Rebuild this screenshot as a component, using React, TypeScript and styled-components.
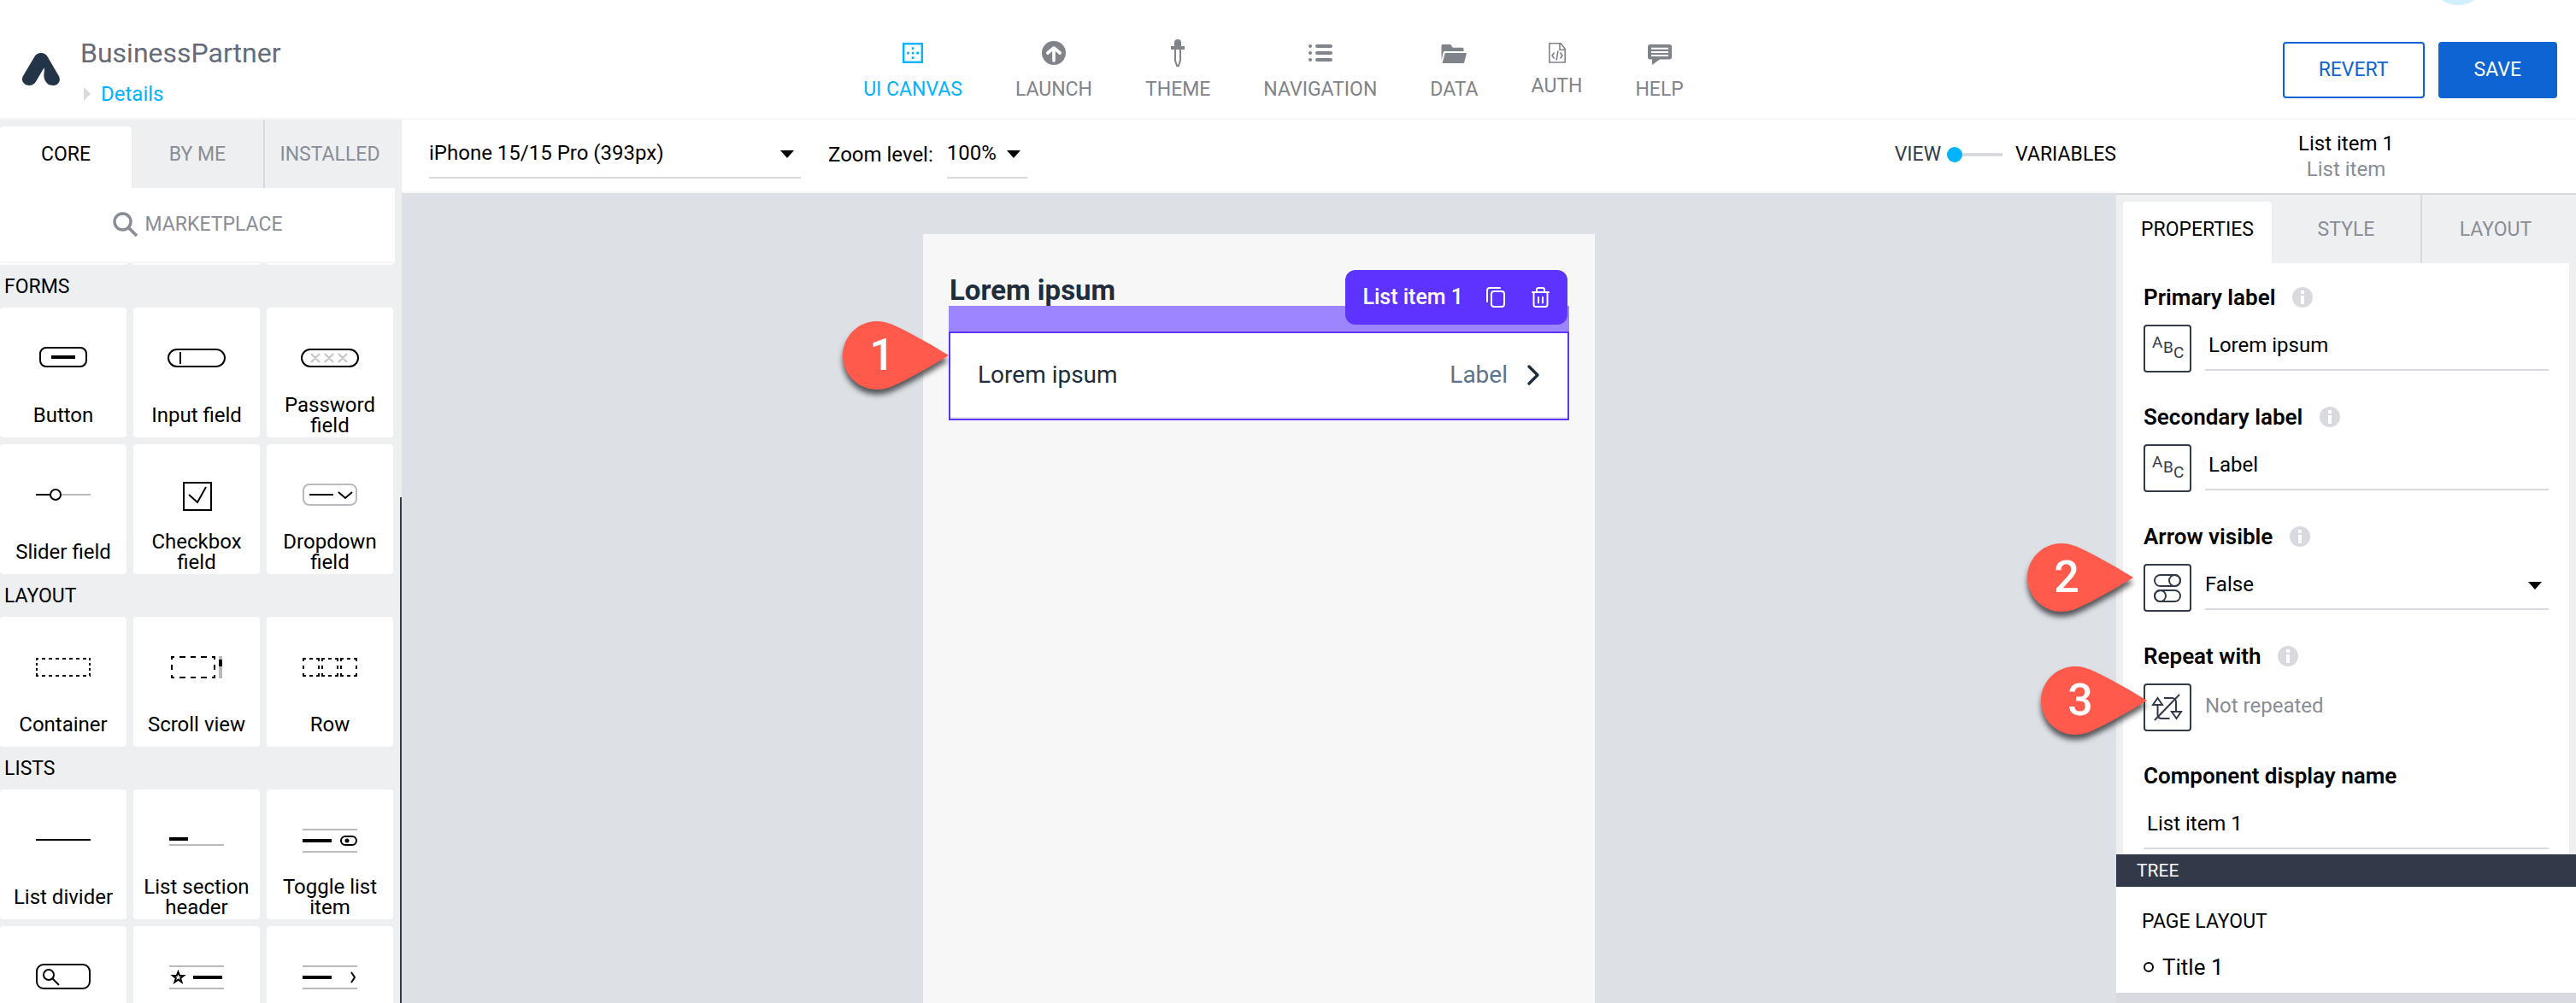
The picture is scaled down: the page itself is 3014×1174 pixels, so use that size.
import React from "react";
import styled, { createGlobalStyle } from "styled-components";

const colors = {
  ink: "#000000",
  slate: "#323a4a",
  navy: "#1d2d3e",
  muted: "#898d96",
  line: "#d8dadf",
  faint: "#f7f7f7",
  panel: "#eeeff1",
  canvas: "#dde1e6",
  sky: "#00b3ff",
  blue: "#0e64d2",
  violet: "#5c33ff",
  lilac: "#9c85ff",
  iconGray: "#808389",
  ghost: "#b9b9c0",
  pin: "#ff5a4b",
};

const GlobalStyle = createGlobalStyle`
  *, *::before, *::after { box-sizing: border-box; }
  body {
    margin: 0;
    background: #fff;
    color: ${colors.ink};
    font-family: Roboto, "Liberation Sans", sans-serif;
    font-size: 24px;
    line-height: 30px;
  }
  button, input, select { font: inherit; color: inherit; margin: 0; }
  button { cursor: pointer; }
  svg { display: block; flex: none; }
`;

/* ---------- shell ---------- */

const Shell = styled.div`
  display: flex;
  flex-direction: column;
  height: 100vh;
  overflow: hidden;
`;

const Body = styled.div`
  flex: 1;
  min-height: 0;
  display: flex;
`;

/* ---------- header ---------- */

const Header = styled.header`
  position: relative;
  flex: none;
  display: grid;
  grid-template-columns: 1fr auto 1fr;
  height: 140px;
  padding-right: 22px;
  border-bottom: 2px solid ${colors.faint};
  overflow: hidden;
`;

const Bubble = styled.span`
  position: absolute;
  top: -60px;
  right: 105px;
  width: 66px;
  height: 66px;
  border-radius: 50%;
  background: #d3efff;
`;

const Brand = styled.div`
  display: flex;
  gap: 24px;
  padding: 42px 0 0 26px;
`;

const LogoBox = styled.div`
  padding-top: 20px;
`;

const BrandText = styled.div`
  display: flex;
  flex-direction: column;
  gap: 13px;
`;

const AppName = styled.h1`
  margin: 0;
  font-size: 32px;
  line-height: 40px;
  font-weight: 400;
  color: #656b78;
`;

const DetailsLink = styled.a`
  display: flex;
  align-items: center;
  gap: 12px;
  padding-left: 4px;
  color: ${colors.sky};
  text-decoration: none;
`;

const Nav = styled.nav`
  display: flex;
  align-items: flex-start;
  gap: 62px;
  padding: 46px 12px 0 0;
`;

const NavButton = styled.button<{ $active?: boolean }>`
  display: flex;
  flex-direction: column;
  align-items: center;
  gap: 13px;
  padding: 0;
  border: 0;
  background: none;
  font-size: 23px;
  line-height: 28px;
  color: ${(p) => (p.$active ? colors.sky : colors.iconGray)};
`;

const Actions = styled.div`
  display: flex;
  justify-content: flex-end;
  align-items: flex-start;
  gap: 16px;
  padding-top: 49px;
`;

const ActionButton = styled.button<{ $primary?: boolean }>`
  height: 66px;
  padding: 0 40px;
  border: 2px solid ${colors.blue};
  border-radius: 4px;
  font-size: 23px;
  background: ${(p) => (p.$primary ? colors.blue : "#fff")};
  color: ${(p) => (p.$primary ? "#fff" : colors.blue)};
`;

/* ---------- tabs ---------- */

const TabRow = styled.div`
  flex: none;
  display: grid;
  grid-template-columns: repeat(3, 1fr);
  height: 80px;
`;

const Tab = styled.button<{ $active?: boolean; $divided?: boolean }>`
  margin: ${(p) => (p.$active ? "8px 0 0" : "0")};
  padding: ${(p) => (p.$active ? "0 0 6px" : "2px 0 0")};
  border: 0;
  border-left: ${(p) => (p.$divided ? `2px solid ${colors.line}` : "0")};
  border-radius: ${(p) => (p.$active ? "4px 4px 0 0" : "0")};
  background: ${(p) => (p.$active ? "#fff" : "transparent")};
  color: ${(p) => (p.$active ? colors.ink : colors.muted)};
  font-size: 23px;
`;

/* ---------- component palette ---------- */

const Sidebar = styled.aside`
  position: relative;
  flex: none;
  display: flex;
  flex-direction: column;
  width: 470px;
  padding-right: 8px;
  background: ${colors.panel};
  overflow: hidden;
`;

const Market = styled.button`
  flex: none;
  display: flex;
  align-items: center;
  justify-content: center;
  gap: 8px;
  height: 88px;
  padding: 0;
  border: 0;
  border-bottom: 2px solid ${colors.faint};
  background: #fff;
  color: ${colors.muted};
  font-size: 23px;
`;

const Palette = styled.div`
  flex: 1;
  min-height: 0;
  padding-right: 2px;
  overflow: hidden;
`;

const CardGrid = styled.div`
  display: grid;
  grid-template-columns: repeat(3, 1fr);
  gap: 8px;
`;

const CardEdge = styled.div`
  height: 2px;
  border-radius: 0 0 4px 4px;
  background: #fff;
`;

const GroupTitle = styled.h2`
  margin: 0;
  padding: 2px 0 0 5px;
  font-size: 23px;
  line-height: 48px;
  font-weight: 400;
`;

const Card = styled.div`
  display: flex;
  flex-direction: column;
  align-items: center;
  height: 152px;
  padding: 14px 8px 2px;
  border-radius: 4px;
  background: #fff;
  text-align: center;
`;

const CardLabel = styled.div`
  flex: 1;
  display: flex;
  align-items: center;
  line-height: 24px;
`;

const ScrollThumb = styled.div`
  position: absolute;
  top: 442px;
  right: 0;
  bottom: 0;
  width: 2px;
  background: ${colors.slate};
`;

/* ---------- canvas ---------- */

const Main = styled.main`
  flex: 1;
  min-width: 0;
  display: flex;
  flex-direction: column;
`;

const Toolbar = styled.div`
  flex: none;
  display: flex;
  align-items: flex-start;
  height: 86px;
  padding: 15px 0 0 32px;
  border-bottom: 2px solid ${colors.faint};
`;

const PickerWrap = styled.div<{ $width: number }>`
  position: relative;
  width: ${(p) => p.$width}px;

  svg {
    position: absolute;
    top: 21px;
    right: 8px;
    pointer-events: none;
  }
`;

const Picker = styled.select`
  display: block;
  width: 100%;
  height: 54px;
  padding: 0 0 4px;
  border: 0;
  border-bottom: 2px solid ${colors.line};
  border-radius: 0;
  background: none;
  appearance: none;
  outline: none;
`;

const ZoomGroup = styled.div`
  display: flex;
  gap: 16px;
  margin-left: 32px;
`;

const ZoomLabel = styled.label`
  line-height: 52px;
`;

const ModeSwitch = styled.div`
  display: flex;
  align-items: center;
  margin-left: auto;
  height: 52px;
  font-size: 23px;
`;

const ModeRange = styled.input`
  appearance: none;
  width: 65px;
  height: 18px;
  margin: 0 15px 0 7px;
  background: linear-gradient(${colors.line}, ${colors.line}) center / 100% 4px no-repeat;

  &::-webkit-slider-thumb {
    appearance: none;
    width: 18px;
    height: 18px;
    border-radius: 50%;
    background: ${colors.sky};
  }
`;

const ViewLabel = styled.span`
  color: ${colors.slate};
`;

const Stage = styled.div`
  flex: 1;
  min-height: 0;
  display: flex;
  justify-content: center;
  padding-top: 48px;
  background: ${colors.canvas};
`;

const Phone = styled.section`
  position: relative;
  width: 786px;
  padding: 48px 30px 0;
  background: ${colors.faint};
`;

const PageTitle = styled.h2`
  margin: 0;
  padding-left: 1px;
  font-size: 33px;
  line-height: 36px;
  font-weight: 700;
  color: ${colors.navy};
`;

const Selection = styled.div`
  position: relative;
  padding-top: 30px;
  background: ${colors.lilac};
`;

const SelectionTools = styled.div`
  position: absolute;
  top: -42px;
  right: 2px;
  display: flex;
  align-items: center;
  gap: 26px;
  height: 64px;
  padding: 0 18px 0 20px;
  border-radius: 12px;
  background: ${colors.violet};
  color: #fff;
  font-size: 25px;
  font-weight: 500;
`;

const IconButton = styled.button`
  padding: 0;
  border: 0;
  background: none;
`;

const ListItem = styled.div`
  display: flex;
  align-items: center;
  height: 104px;
  padding: 0 30px 2px 32px;
  border: 2px solid ${colors.violet};
  background: #fff;
  box-shadow: inset 0 -2px 0 #e5e5e5;
  font-size: 28px;
  color: ${colors.navy};
`;

const ItemSecondary = styled.span`
  margin: 0 20px 0 auto;
  color: #5b738b;
`;

/* ---------- inspector ---------- */

const Inspector = styled.aside`
  flex: none;
  display: flex;
  flex-direction: column;
  width: 538px;
  background: ${colors.panel};
`;

const InspectorHead = styled.div`
  flex: none;
  height: 88px;
  padding-top: 13px;
  border-bottom: 2px solid ${colors.line};
  background: #fff;
  text-align: center;
`;

const HeadKind = styled.div`
  color: ${colors.muted};
`;

const InspectorBody = styled.div`
  flex: 1;
  min-height: 0;
  display: flex;
  flex-direction: column;
  padding: 0 8px;
`;

const Properties = styled.div`
  flex: 1;
  min-height: 0;
  display: flex;
  flex-direction: column;
  gap: 36px;
  padding: 24px 24px 0;
  background: #fff;
`;

const Field = styled.div`
  display: flex;
  flex-direction: column;
  gap: 16px;
`;

const FieldHead = styled.div`
  display: flex;
  align-items: center;
  gap: 20px;
`;

const FieldLabel = styled.label`
  font-size: 26px;
  line-height: 32px;
  font-weight: 600;
`;

const FieldRow = styled.div`
  position: relative;
  display: flex;
  gap: 16px;
`;

const TypeButton = styled.button`
  flex: none;
  display: flex;
  align-items: center;
  justify-content: center;
  width: 56px;
  height: 56px;
  padding: 0;
  border: 2px solid ${colors.slate};
  border-radius: 4px;
  background: #fff;
  color: ${colors.slate};
`;

const FieldValue = styled.div`
  position: relative;
  flex: 1;

  svg {
    position: absolute;
    top: 21px;
    right: 8px;
    pointer-events: none;
  }
`;

const TextInput = styled.input`
  display: block;
  flex: 1;
  width: 100%;
  height: 54px;
  padding: 0 4px 4px;
  border: 0;
  border-bottom: 2px solid ${colors.line};
  background: none;
  outline: none;
`;

const EmptyValue = styled.span`
  line-height: 52px;
  color: ${colors.muted};
`;

const TreeBar = styled.div`
  flex: none;
  padding-left: 24px;
  background: ${colors.slate};
  color: #fff;
  font-size: 21px;
  line-height: 38px;
`;

const Tree = styled.div`
  flex: none;
  display: flex;
  flex-direction: column;
  gap: 24px;
  height: 136px;
  padding: 24px 30px 0;
  border-bottom: 12px solid ${colors.line};
  background: #fff;
`;

const TreeHeading = styled.div`
  font-size: 23px;
  padding-top: 2px;
`;

const TreeNode = styled.div`
  display: flex;
  align-items: center;
  gap: 10px;
  padding-left: 2px;
  font-size: 26px;
  line-height: 28px;
`;

/* ---------- callout pins ---------- */

const PinBox = styled.div<{ $left: number; $top: number }>`
  position: absolute;
  z-index: 5;
  left: ${(p) => p.$left}px;
  top: ${(p) => p.$top}px;

  svg {
    overflow: visible;
    filter: drop-shadow(0 6px 3px rgba(40, 40, 45, 0.75));
  }
`;

const PinNumber = styled.span`
  position: absolute;
  top: 10px;
  left: 16px;
  width: 60px;
  font-size: 52px;
  line-height: 60px;
  font-weight: 500;
  text-align: center;
  color: #fff;
`;

function Pin({ n, left, top }: { n: number; left: number; top: number }) {
  return (
    <PinBox $left={left} $top={top}>
      <svg width="124" height="80" viewBox="0 0 124 80">
        <path d="M40 0C18 0 0 18 0 40s18 40 40 40c9 0 17-3 27-8C87 62 108 50 124 40 108 30 87 18 67 8 57 3 49 0 40 0z" fill={colors.pin} />
      </svg>
      <PinNumber>{n}</PinNumber>
    </PinBox>
  );
}

/* ---------- drawings ---------- */

const Caret = () => (
  <svg width="16" height="9" viewBox="0 0 16 9">
    <path d="M0 0h16L8 9z" fill="#000" />
  </svg>
);

const InfoDot = () => (
  <svg width="24" height="24" viewBox="0 0 24 24">
    <circle cx="12" cy="12" r="12" fill={colors.line} />
    <path d="M10 4h4v4h-4zM10 10h4v10h-4z" fill="#fff" />
  </svg>
);

const Logo = () => (
  <svg width="44" height="38" viewBox="0 0 44 38">
    <path
      d="M22 0c3.600 0 6 1.600 7.700 4.600L42.800 27C45.800 32.500 42 38 36 38c-6.500 0-10-5-10.600-10.500-.2-3.200.6-6.200.6-10L24.500 19 16 33.500C14 36.500 11.500 38 8 38c-6.200 0-10-5.800-7-11L14.300 4.600C16 1.600 18.400 0 22 0z"
      fill="#233449"
    />
  </svg>
);

const navIcons: Record<string, React.ReactNode> = {
  canvas: (
    <g fill="currentColor">
      <rect x="5.200" y="5.200" width="21.600" height="21.600" fill="none" stroke="currentColor" strokeWidth="2.400" />
      <path d="M14.800 9.200h2.600V12h-2.600zM14.800 14.800h2.600v2.600h-2.600zM14.800 20.200h2.600V23h-2.600zM9.200 14.800H12v2.600H9.200zM20.200 14.800H23v2.600h-2.800z" />
    </g>
  ),
  launch: (
    <g>
      <circle cx="16" cy="16" r="14" fill="currentColor" />
      <path d="M16 25V11M8.800 16L16 10l7.200 6" fill="none" stroke="#fff" strokeWidth="3.600" strokeLinecap="round" strokeLinejoin="round" />
    </g>
  ),
  theme: (
    <g>
      <path d="M12 4a4 4 0 0 1 8 0v4h4v4H8V8h4z" fill="currentColor" />
      <path d="M13 12v12c0 3 1.500 4 2 7h2c.5-3 2-4 2-7V12" fill="none" stroke="currentColor" strokeWidth="2" />
    </g>
  ),
  navigation: (
    <g fill="currentColor">
      {[6, 14, 22].map((y) => (
        <React.Fragment key={y}>
          <rect x="2" y={y} width="4" height="4" rx="2" />
          <rect x="10" y={y} width="20" height="4" rx="2" />
        </React.Fragment>
      ))}
    </g>
  ),
  data: (
    <g fill="currentColor">
      <path d="M1.500 7.500c0-1 .5-1.500 1.500-1.500h8c1 0 1.500.3 2 1l1.600 2.800H26c1 0 1.500.7 1.500 1.700V14H5.500c-1 0-1.500.4-1.700 1.200L1.500 24z" />
      <path d="M6.500 16H30c.6 0 .9.400.8 1l-2.600 10c-.2.700-.6 1-1.200 1H2.500L5.600 16.800c.1-.5.400-.8.900-.8z" />
    </g>
  ),
  auth: (
    <g fill="none" stroke="currentColor">
      <path d="M6.800 4.800h13.400l5 6.500V27H6.800zM19 4.800v7.500h6.200" strokeWidth="1.600" />
      <path d="M12.500 15.500L10 19l2.500 3.500M19.500 15.500L22 19l-2.500 3.500M17 13.500l-2 11" strokeWidth="1.600" />
    </g>
  ),
  help: (
    <g>
      <path d="M4.500 6h23C29 6 30 7 30 8.500V21c0 1.500-1 2.500-2.500 2.500H16L7 30v-6.500H4.500C3 23.500 2 22.500 2 21V8.500C2 7 3 6 4.500 6z" fill="currentColor" />
      <path d="M6 10.800h20M6 15h20M6 19h20" stroke="#fff" strokeWidth="2" />
    </g>
  ),
};

function NavIcon({ name, height = 32 }: { name: string; height?: number }) {
  return (
    <svg width="32" height={height} viewBox={`0 0 32 ${height}`}>
      {navIcons[name]}
    </svg>
  );
}

const dividers = <path d="M18 33h64M18 59h64" stroke={colors.ghost} strokeWidth="2" />;

const cardIcons: Record<string, React.ReactNode> = {
  button: (
    <g>
      <rect x="23" y="33" width="54" height="22" rx="7" fill="none" stroke="#000" strokeWidth="2" />
      <rect x="36" y="42" width="28" height="4" />
    </g>
  ),
  input: (
    <g fill="none" stroke="#000" strokeWidth="2">
      <rect x="17" y="35" width="66" height="20" rx="10" />
      <path d="M31 38v14" />
    </g>
  ),
  password: (
    <g fill="none" strokeWidth="2">
      <rect x="17" y="35" width="66" height="20" rx="10" stroke="#000" />
      <path d="M28 40l10 10M38 40L28 50M44 40l10 10M54 40L44 50M60 40l10 10M70 40L60 50" stroke="#c4c4c8" />
    </g>
  ),
  slider: (
    <g fill="none" strokeWidth="2">
      <path d="M18 45h17" stroke="#000" />
      <path d="M47 45h35" stroke={colors.ghost} />
      <circle cx="41" cy="45" r="6" stroke="#000" />
    </g>
  ),
  checkbox: (
    <g fill="none" stroke="#000" strokeWidth="2">
      <rect x="35" y="31" width="32" height="32" />
      <path d="M41 45l10 9 10-18" />
    </g>
  ),
  dropdown: (
    <g fill="none" strokeWidth="2">
      <rect x="19" y="33" width="62" height="24" rx="7" stroke={colors.ghost} />
      <path d="M26 45h28M60 42l8 7 8-7" stroke="#000" />
    </g>
  ),
  container: (
    <g fill="none" stroke="#000" strokeWidth="2">
      <path d="M18 35h64M18 55h64" strokeDasharray="3 4 4 4 4 4 4 4 4 4 4 4 4 4 4 4 3 9" />
      <path d="M19 34v22M81 34v22" strokeDasharray="3 3" />
    </g>
  ),
  scroll: (
    <g>
      <path d="M20 33h52M20 57h52" stroke="#000" strokeWidth="2" strokeDasharray="4 6 7 6 6 6 7 6 4" />
      <path d="M21 32v26M71 32v26" stroke="#000" strokeWidth="2" strokeDasharray="4 6 6 6 4" />
      <rect x="76" y="32" width="4" height="26" fill={colors.ghost} />
      <rect x="76" y="36" width="4" height="8" />
    </g>
  ),
  row: (
    <g fill="none" stroke="#000" strokeWidth="2">
      {[18, 40, 62].map((x) => (
        <React.Fragment key={x}>
          <path d={`M${x} 35h20M${x} 55h20`} strokeDasharray="4 4" />
          <path d={`M${x + 1} 34v22M${x + 19} 34v22`} strokeDasharray="4 5" />
        </React.Fragment>
      ))}
    </g>
  ),
  divider: <path d="M18 45h64" stroke="#000" strokeWidth="2" />,
  section: (
    <g>
      <rect x="18" y="42" width="22" height="4" />
      <rect x="18" y="50" width="64" height="2" fill={colors.ghost} />
    </g>
  ),
  toggle: (
    <g>
      {dividers}
      <rect x="18" y="44" width="34" height="4" />
      <rect x="63" y="41" width="18" height="10" rx="5" fill="none" stroke="#000" strokeWidth="2" />
      <circle cx="70" cy="46" r="2.500" />
    </g>
  ),
  search: (
    <g fill="none" stroke="#000" strokeWidth="2">
      <rect x="19" y="31" width="62" height="28" rx="8" />
      <circle cx="33" cy="43" r="6" />
      <path d="M37.500 47.500L45 55" />
    </g>
  ),
  star: (
    <g>
      {dividers}
      <path
        d="M28.500 39.500l1.700 4.500h4.600l-3.700 2.900 1.400 4.600-4-2.800-4 2.800 1.400-4.600-3.700-2.900h4.600z"
        fill="none"
        stroke="#000"
        strokeWidth="2"
      />
      <rect x="46" y="44" width="34" height="4" />
    </g>
  ),
  arrowItem: (
    <g>
      {dividers}
      <rect x="18" y="44" width="34" height="4" />
      <path d="M75 40l4 6-4 6" fill="none" stroke="#000" strokeWidth="2" />
    </g>
  ),
};

const CardIcon = ({ name }: { name: string }) => (
  <svg width="100" height="88" viewBox="0 0 100 88">
    {cardIcons[name]}
  </svg>
);

const AbcIcon = () => (
  <svg width="40" height="40" viewBox="0 0 40 40" fill="currentColor" fontFamily="Roboto, sans-serif" fontSize="19">
    <text x="2" y="19">A</text>
    <text x="15" y="25">B</text>
    <text x="27" y="31">C</text>
  </svg>
);

const ToggleIcon = () => (
  <svg width="40" height="40" viewBox="0 0 40 40" fill="none" stroke="currentColor" strokeWidth="2">
    <rect x="5" y="5" width="30" height="13" rx="6.500" />
    <circle cx="28.500" cy="11.500" r="6.500" />
    <rect x="5" y="23" width="30" height="13" rx="6.500" />
    <circle cx="11.500" cy="29.500" r="6.500" />
  </svg>
);

const RepeatIcon = () => (
  <svg width="40" height="40" viewBox="0 0 40 40" fill="none" stroke="currentColor" strokeWidth="2">
    <path d="M8.500 9L14 17H3z" />
    <path d="M8.500 17v11c0 3 2 5 5 5h9" />
    <path d="M16 9h9c3 0 5 2 5 5v11" />
    <path d="M30.500 33L25 25h11z" />
    <path d="M34 5L5 35" />
  </svg>
);

const CopyIcon = () => (
  <svg width="26" height="26" viewBox="0 0 26 26" fill="none" stroke="#fff" strokeWidth="2" strokeLinecap="round">
    <rect x="7" y="6" width="15" height="18" rx="3" />
    <path d="M2 18V5c0-2 1-3 3-3h12" />
  </svg>
);

const TrashIcon = () => (
  <svg width="26" height="26" viewBox="0 0 26 26" fill="none" stroke="#fff" strokeWidth="2" strokeLinecap="round">
    <path d="M3 7h19M8 7V4c0-1.300.7-2 2-2h5c1.300 0 2 .7 2 2v3" />
    <path d="M4.500 7v14.500c0 1.600.9 2.500 2.500 2.500h11c1.600 0 2.500-.9 2.500-2.500V7M10 13v6.500M15 13v6.500" />
  </svg>
);

/* ---------- data ---------- */

const navItems = [
  { label: "UI CANVAS", icon: "canvas", active: true },
  { label: "LAUNCH", icon: "launch" },
  { label: "THEME", icon: "theme" },
  { label: "NAVIGATION", icon: "navigation" },
  { label: "DATA", icon: "data" },
  { label: "AUTH", icon: "auth", height: 28 },
  { label: "HELP", icon: "help" },
];

const groups = [
  {
    title: "FORMS",
    cards: [
      ["button", "Button"],
      ["input", "Input field"],
      ["password", "Password field"],
      ["slider", "Slider field"],
      ["checkbox", "Checkbox field"],
      ["dropdown", "Dropdown field"],
    ],
  },
  {
    title: "LAYOUT",
    cards: [
      ["container", "Container"],
      ["scroll", "Scroll view"],
      ["row", "Row"],
    ],
  },
  {
    title: "LISTS",
    cards: [
      ["divider", "List divider"],
      ["section", "List section header"],
      ["toggle", "Toggle list item"],
      ["search", ""],
      ["star", ""],
      ["arrowItem", ""],
    ],
  },
];

/* ---------- page ---------- */

export default function App() {
  return (
    <Shell>
      <GlobalStyle />
      <Header>
        <Brand>
          <LogoBox>
            <Logo />
          </LogoBox>
          <BrandText>
            <AppName>BusinessPartner</AppName>
            <DetailsLink href="#details">
              <svg width="8" height="16" viewBox="0 0 8 16">
                <path d="M0 0l8 8-8 8z" fill={colors.line} />
              </svg>
              Details
            </DetailsLink>
          </BrandText>
        </Brand>
        <Nav>
          {navItems.map((item) => (
            <NavButton key={item.label} $active={item.active}>
              <NavIcon name={item.icon} height={item.height} />
              {item.label}
            </NavButton>
          ))}
        </Nav>
        <Actions>
          <ActionButton>REVERT</ActionButton>
          <ActionButton $primary>SAVE</ActionButton>
        </Actions>
        <Bubble />
      </Header>

      <Body>
        <Sidebar>
          <TabRow>
            <Tab $active>CORE</Tab>
            <Tab>BY ME</Tab>
            <Tab $divided>INSTALLED</Tab>
          </TabRow>
          <Market>
            <svg width="30" height="30" viewBox="0 0 30 30" fill="none" stroke={colors.muted}>
              <circle cx="11.500" cy="11.500" r="9.500" strokeWidth="3.400" />
              <path d="M18.500 18.500L28 28" strokeWidth="3.800" />
            </svg>
            MARKETPLACE
          </Market>
          <Palette>
            <CardGrid>
              <CardEdge />
              <CardEdge />
              <CardEdge />
            </CardGrid>
            {groups.map((group) => (
              <section key={group.title}>
                <GroupTitle>{group.title}</GroupTitle>
                <CardGrid>
                  {group.cards.map(([icon, label]) => (
                    <Card key={icon}>
                      <CardIcon name={icon} />
                      <CardLabel>{label}</CardLabel>
                    </Card>
                  ))}
                </CardGrid>
              </section>
            ))}
          </Palette>
          <ScrollThumb />
        </Sidebar>

        <Main>
          <Toolbar>
            <PickerWrap $width={435}>
              <Picker aria-label="Device">
                <option>iPhone 15/15 Pro (393px)</option>
              </Picker>
              <Caret />
            </PickerWrap>
            <ZoomGroup>
              <ZoomLabel htmlFor="zoom">Zoom level:</ZoomLabel>
              <PickerWrap $width={94}>
                <Picker id="zoom">
                  <option>100%</option>
                </Picker>
                <Caret />
              </PickerWrap>
            </ZoomGroup>
            <ModeSwitch>
              <ViewLabel>VIEW</ViewLabel>
              <ModeRange type="range" min={0} max={1} defaultValue={0} aria-label="View or variables" />
              <span>VARIABLES</span>
            </ModeSwitch>
          </Toolbar>
          <Stage>
            <Phone>
              <PageTitle>Lorem ipsum</PageTitle>
              <Selection>
                <ListItem>
                  <span>Lorem ipsum</span>
                  <ItemSecondary>Label</ItemSecondary>
                  <svg width="20" height="26" viewBox="0 0 20 26">
                    <path d="M5 3l10 10L5 23" fill="none" stroke={colors.navy} strokeWidth="3.400" strokeLinecap="round" strokeLinejoin="round" />
                  </svg>
                </ListItem>
                <SelectionTools>
                  <span>List item 1</span>
                  <IconButton aria-label="Duplicate">
                    <CopyIcon />
                  </IconButton>
                  <IconButton aria-label="Delete">
                    <TrashIcon />
                  </IconButton>
                </SelectionTools>
              </Selection>
              <Pin n={1} left={-94} top={102} />
            </Phone>
          </Stage>
        </Main>

        <Inspector>
          <InspectorHead>
            <div>List item 1</div>
            <HeadKind>List item</HeadKind>
          </InspectorHead>
          <InspectorBody>
            <TabRow>
              <Tab $active>PROPERTIES</Tab>
              <Tab>STYLE</Tab>
              <Tab $divided>LAYOUT</Tab>
            </TabRow>
            <Properties>
              <Field>
                <FieldHead>
                  <FieldLabel htmlFor="primary">Primary label</FieldLabel>
                  <InfoDot />
                </FieldHead>
                <FieldRow>
                  <TypeButton aria-label="Text binding">
                    <AbcIcon />
                  </TypeButton>
                  <TextInput id="primary" defaultValue="Lorem ipsum" />
                </FieldRow>
              </Field>
              <Field>
                <FieldHead>
                  <FieldLabel htmlFor="secondary">Secondary label</FieldLabel>
                  <InfoDot />
                </FieldHead>
                <FieldRow>
                  <TypeButton aria-label="Text binding">
                    <AbcIcon />
                  </TypeButton>
                  <TextInput id="secondary" defaultValue="Label" />
                </FieldRow>
              </Field>
              <Field>
                <FieldHead>
                  <FieldLabel htmlFor="arrow">Arrow visible</FieldLabel>
                  <InfoDot />
                </FieldHead>
                <FieldRow>
                  <TypeButton aria-label="True or false binding">
                    <ToggleIcon />
                  </TypeButton>
                  <FieldValue>
                    <Picker id="arrow">
                      <option>False</option>
                    </Picker>
                    <Caret />
                  </FieldValue>
                  <Pin n={2} left={-136} top={-24} />
                </FieldRow>
              </Field>
              <Field>
                <FieldHead>
                  <FieldLabel htmlFor="repeat">Repeat with</FieldLabel>
                  <InfoDot />
                </FieldHead>
                <FieldRow>
                  <TypeButton id="repeat">
                    <RepeatIcon />
                  </TypeButton>
                  <EmptyValue>Not repeated</EmptyValue>
                  <Pin n={3} left={-120} top={-20} />
                </FieldRow>
              </Field>
              <Field>
                <FieldHead>
                  <FieldLabel htmlFor="display">Component display name</FieldLabel>
                </FieldHead>
                <FieldRow>
                  <TextInput id="display" defaultValue="List item 1" />
                </FieldRow>
              </Field>
            </Properties>
          </InspectorBody>
          <TreeBar>TREE</TreeBar>
          <Tree>
            <TreeHeading>PAGE LAYOUT</TreeHeading>
            <TreeNode>
              <svg width="12" height="12" viewBox="0 0 12 12">
                <circle cx="6" cy="6" r="5" fill="none" stroke="#000" strokeWidth="2" />
              </svg>
              Title 1
            </TreeNode>
          </Tree>
        </Inspector>
      </Body>
    </Shell>
  );
}
